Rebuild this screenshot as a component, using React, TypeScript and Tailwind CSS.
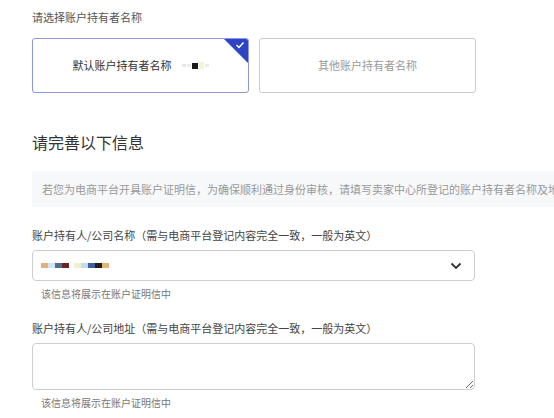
import React from "react";

const blurA = ["#e2b27e", "#cfe6f2", "#4d6e96", "#6b2323"];
const blurB = ["#f6efcf", "#c3dcf0", "#3f5f9e", "#1f1f1f", "#e3b673"];

export default function App() {
  return (
    <div
      className="w-[554px] h-[418px] overflow-hidden bg-white pl-8 pt-[9px] flex flex-col"
      style={{ fontFamily: '"Noto Sans CJK SC", "Noto Sans", sans-serif' }}
    >
      <div className="text-[11px] leading-4 text-[#555]">请选择账户持有者名称</div>

      <div className="mt-[13px] flex gap-[10px]">
        <div className="relative h-[55px] w-[217px] rounded-[3px] border border-[#8d97dc] bg-white overflow-hidden flex items-center justify-center">
          <span className="text-[11px] text-[#333]">默认账户持有者名称</span>
          <span className="ml-[10px] flex items-center gap-[1px]">
            <span className="h-[3px] w-[4px] bg-[#e6e6e6]" />
            <span className="h-[3px] w-[4px] bg-[#ececec]" />
            <span className="h-[6px] w-[6px] bg-[#1a1a1a]" />
            <span className="h-[7px] w-[5px] bg-[#f4f5cf]" />
            <span className="h-[3px] w-[4px] bg-[#ececec]" />
          </span>
          <svg className="absolute right-0 top-0" width="24" height="24" viewBox="0 0 24 24">
            <polygon points="0,0 24,0 24,24" fill="#2e44c6" />
            <polyline points="12.5,6 15,8.5 19.5,3.5" fill="none" stroke="#fff" strokeWidth="1.5" />
          </svg>
        </div>
        <div className="h-[55px] w-[217px] rounded-[3px] border border-[#cccccc] bg-white flex items-center justify-center">
          <span className="text-[11px] text-[#999]">其他账户持有者名称</span>
        </div>
      </div>

      <div className="mt-[37px] text-[16px] leading-6 text-[#333]">请完善以下信息</div>

      <div className="mt-[17px] h-[36px] w-[720px] shrink-0 bg-[#f7f8fa] pl-[10px] flex items-center whitespace-nowrap text-[11px] text-[#999]">
        若您为电商平台开具账户证明信，为确保顺利通过身份审核，请填写卖家中心所登记的账户持有者名称及地址
      </div>

      <div className="mt-[20px] text-[11px] leading-4 text-[#444]">
        账户持有人/公司名称（需与电商平台登记内容完全一致，一般为英文）
      </div>

      <div className="mt-[7px] h-[31px] w-[443px] shrink-0 rounded-[4px] border border-[#cfcfcf] bg-white flex items-center pl-[8px] pr-[12px]">
        <div className="flex items-center">
          {blurA.map((c, i) => (
            <span key={"a" + i} className="h-[5px] w-[7px]" style={{ backgroundColor: c }} />
          ))}
          <span className="w-[5px]" />
          {blurB.map((c, i) => (
            <span key={"b" + i} className="h-[5px] w-[7px]" style={{ backgroundColor: c }} />
          ))}
        </div>
        <svg className="ml-auto" width="12" height="8" viewBox="0 0 12 8">
          <polyline points="1.5,1.5 6,6 10.5,1.5" fill="none" stroke="#333" strokeWidth="1.8" />
        </svg>
      </div>

      <div className="mt-[6px] pl-[9px] text-[10px] leading-[14px] text-[#777]">该信息将展示在账户证明信中</div>

      <div className="mt-[19px] text-[11px] leading-4 text-[#444]">
        账户持有人/公司地址（需与电商平台登记内容完全一致，一般为英文）
      </div>

      <textarea className="mt-[7px] h-[47px] w-[443px] shrink-0 rounded-[4px] border border-[#cfcfcf] bg-white outline-none" />

      <div className="mt-[6px] pl-[9px] text-[10px] leading-[14px] text-[#777]">该信息将展示在账户证明信中</div>
    </div>
  );
}
